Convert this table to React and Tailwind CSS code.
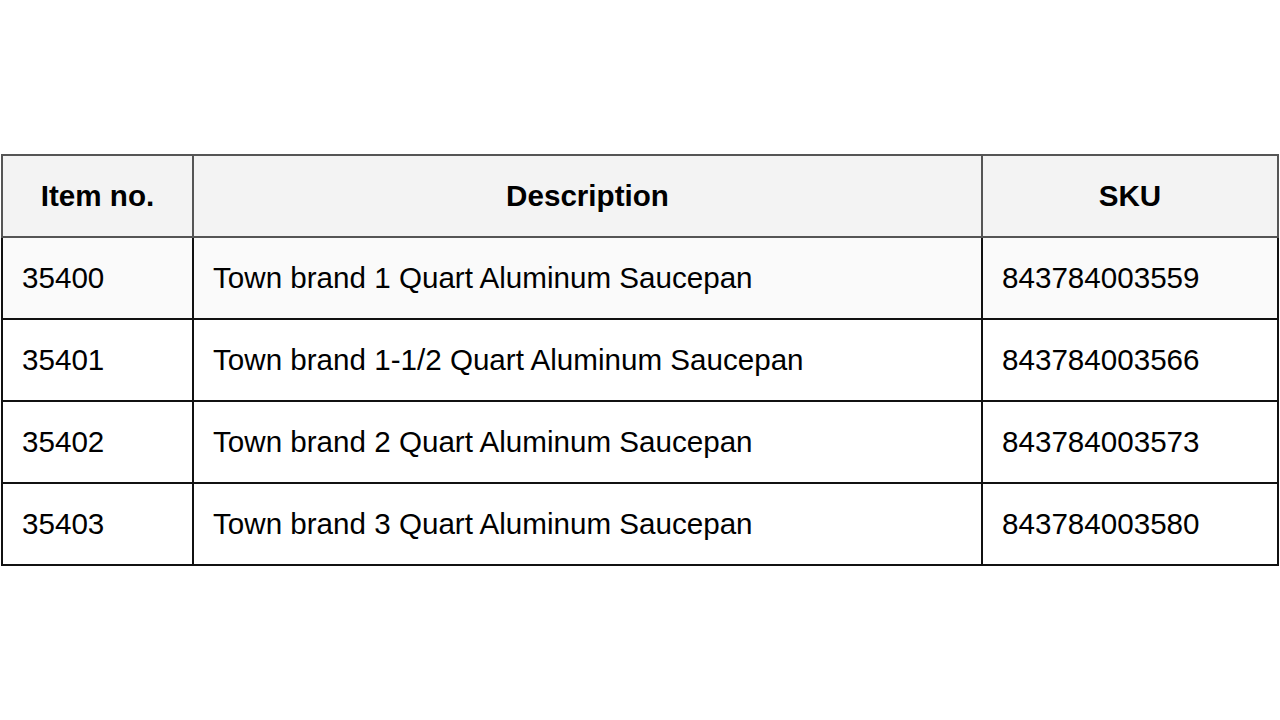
const rows = [
  { item: "35400", desc: "Town brand 1 Quart Aluminum Saucepan", sku: "843784003559" },
  { item: "35401", desc: "Town brand 1-1/2 Quart Aluminum Saucepan", sku: "843784003566" },
  { item: "35402", desc: "Town brand 2 Quart Aluminum Saucepan", sku: "843784003573" },
  { item: "35403", desc: "Town brand 3 Quart Aluminum Saucepan", sku: "843784003580" },
];

export default function App() {
  return (
    <div className="w-full h-screen bg-white flex items-center justify-center font-['Liberation_Sans',Arial,sans-serif] text-[29.6px] text-black">
      <table className="w-[1278px] border-collapse table-fixed">
        <colgroup>
          <col className="w-[191px]" />
          <col className="w-[789px]" />
          <col />
        </colgroup>
        <thead>
          <tr className="h-[82px] bg-[#f3f3f3]">
            <th className="border-2 border-[#555] font-bold text-center">Item no.</th>
            <th className="border-2 border-[#555] font-bold text-center">Description</th>
            <th className="border-2 border-[#555] font-bold text-center">SKU</th>
          </tr>
        </thead>
        <tbody>
          {rows.map((r, i) => (
            <tr key={r.item} className={i === 0 ? "h-[82px] bg-[#fafafa]" : "h-[82px]"}>
              <td className="border-2 border-[#111] pl-[19px] pr-4 text-left">{r.item}</td>
              <td className="border-2 border-[#111] pl-[19px] pr-4 text-left">{r.desc}</td>
              <td className="border-2 border-[#111] pl-[19px] pr-4 text-left">{r.sku}</td>
            </tr>
          ))}
        </tbody>
      </table>
    </div>
  );
}
